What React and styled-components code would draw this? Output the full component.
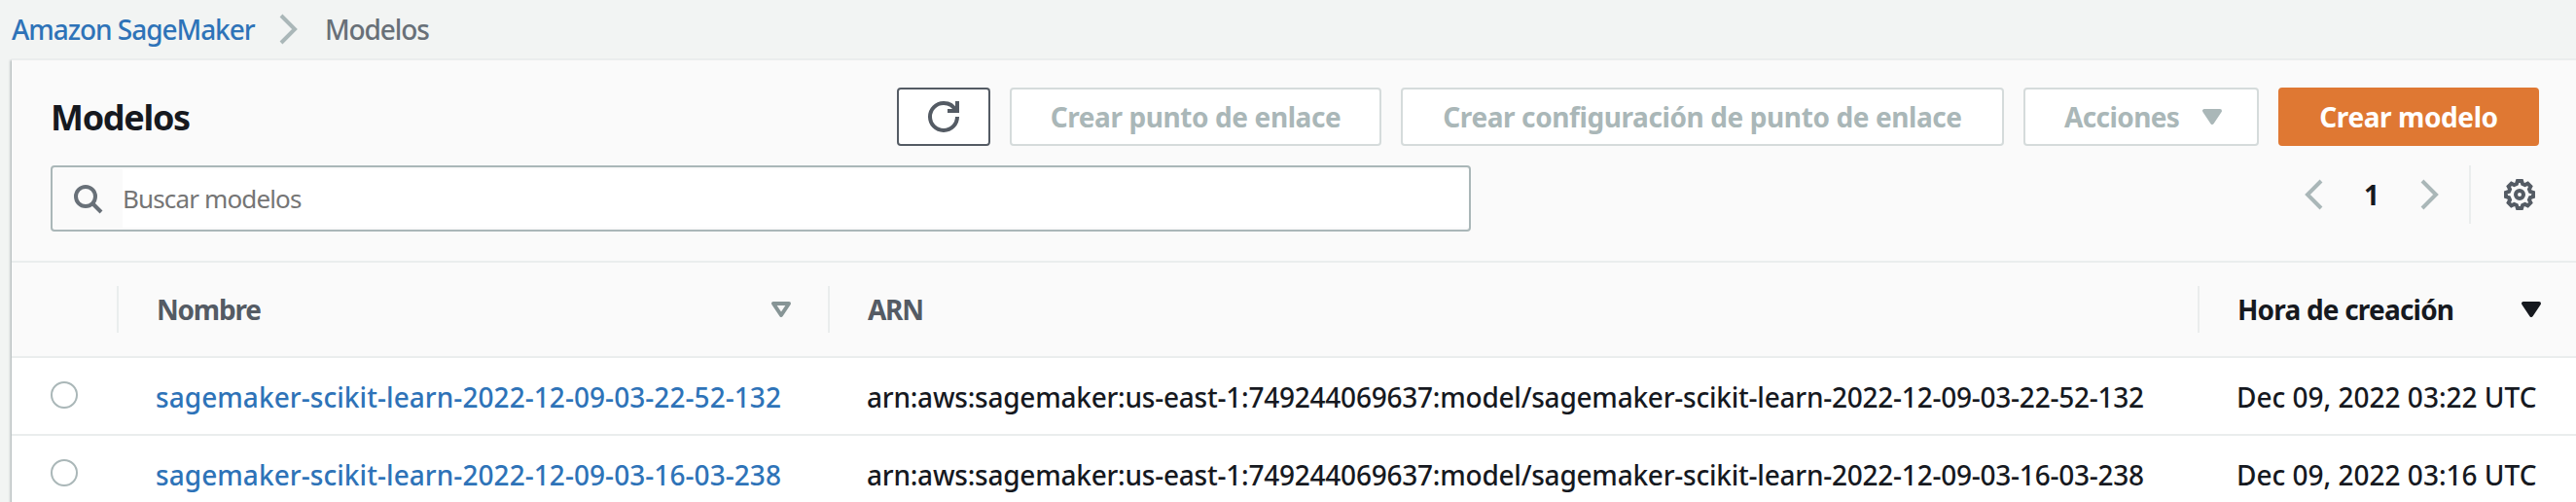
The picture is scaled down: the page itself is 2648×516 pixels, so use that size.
import React from 'react';
import styled, { createGlobalStyle, css } from 'styled-components';

const GlobalStyle = createGlobalStyle`
  * { box-sizing: border-box; }
  body {
    margin: 0;
    background: #f2f4f3;
    color: #16191f;
    font-family: "Noto Sans", "Open Sans", sans-serif;
    font-size: 28px;
    line-height: 38px;
    overflow: hidden;
  }
`;

const Page = styled.div`
  width: 2648px;
  height: 516px;
  overflow: hidden;
`;

const Breadcrumbs = styled.nav`
  display: flex;
  align-items: center;
  height: 60px;
  padding-left: 12px;
  font-weight: 500;
`;

const CrumbLink = styled.a`
  width: 269px;
  color: #2e73b8;
  text-decoration: none;
  letter-spacing: -1.05px;
`;

const CrumbCurrent = styled.span`
  padding-left: 21px;
  color: #687078;
  letter-spacing: -1.1px;
`;

const Icon = styled.svg.attrs({ viewBox: '0 0 16 16' })`
  width: 32px;
  height: 32px;
  flex: none;
  fill: none;
  stroke: currentColor;
  stroke-width: 2;
`;

const MutedIcon = styled(Icon)`
  color: #aab7b8;
`;

const Card = styled.section`
  width: 2638px;
  margin-left: 12px;
  border-top: 2px solid #eaeded;
  background: #fff;
  box-shadow:
    0 2px 2px 0 rgba(0, 28, 36, 0.3),
    2px 2px 2px 0 rgba(0, 28, 36, 0.15),
    -2px 2px 2px 0 rgba(0, 28, 36, 0.15);
`;

const CardHeader = styled.header`
  height: 208px;
  padding: 28px 40px 0;
  border-bottom: 2px solid #eaeded;
  background: #fafafa;
`;

const TitleRow = styled.div`
  display: flex;
  align-items: center;
  justify-content: space-between;
  height: 60px;
`;

const Title = styled.h1`
  margin: 0;
  padding-top: 1px;
  font-size: 36px;
  line-height: 48px;
  font-weight: 700;
  letter-spacing: -1.3px;
`;

const Actions = styled.div`
  display: flex;
  gap: 20px;
`;

const variants = {
  normal: css`
    border-color: #545b64;
    background: #fff;
    color: #545b64;
  `,
  disabled: css`
    border-color: #d5dbdb;
    background: #fff;
    color: #aab7b8;
  `,
  primary: css`
    border-color: #df7833;
    background: #df7833;
    color: #fff;
  `,
};

const Button = styled.button`
  display: flex;
  align-items: center;
  justify-content: center;
  width: ${(p) => p.$width}px;
  height: 60px;
  padding: 0;
  border: 2px solid;
  border-radius: 4px;
  font: inherit;
  font-weight: 700;
  letter-spacing: -0.4px;
  white-space: nowrap;
  ${(p) => variants[p.$variant]}
`;

const MenuButton = styled(Button)`
  justify-content: space-between;
  padding: 0 30px 0 40px;
  letter-spacing: -0.6px;
`;

const ButtonLabel = styled.span`
  padding-bottom: 1px;
`;

const FilterRow = styled.div`
  display: flex;
  justify-content: space-between;
  align-items: flex-start;
  margin-top: 20px;
`;

const SearchBox = styled.label`
  display: flex;
  align-items: center;
  width: 1460px;
  height: 68px;
  padding: 0 0 0 20px;
  border: 2px solid #aab7b8;
  border-radius: 4px;
  color: #687078;
`;

const SearchInput = styled.input`
  flex: 1;
  height: 60px;
  margin-left: 20px;
  padding: 0;
  border: 0;
  background: #fff;
  font: inherit;
  font-size: 26px;
  letter-spacing: -0.86px;
  &::placeholder {
    color: #757575;
    opacity: 1;
  }
`;

const Pager = styled.div`
  display: flex;
  align-items: center;
  height: 60px;
`;

const PageNumber = styled.span`
  width: 88px;
  padding-bottom: 1px;
  text-align: center;
  font-weight: 700;
`;

const Preferences = styled.div`
  display: flex;
  align-items: center;
  height: 60px;
  margin-left: 24px;
  padding: 0 4px 0 34px;
  border-left: 2px solid #eaeded;
  color: #545b64;
`;

const Row = styled.div`
  display: grid;
  grid-template-columns: 110px 731px 1408px 1fr;
  align-items: center;
  height: 80px;
  border-bottom: 2px solid #eaeded;
  font-weight: 500;
`;

const HeaderRow = styled(Row)`
  height: 98px;
  background: #fafafa;
  color: #545b64;
  font-weight: 700;
`;

const HeaderCell = styled.div`
  display: flex;
  align-items: center;
  justify-content: space-between;
  height: 48px;
  padding: 0 32px 0 39px;
  border-right: ${(p) => (p.$last ? 0 : '2px solid #eaeded')};
  color: ${(p) => (p.$sorted ? '#16191f' : 'inherit')};
  letter-spacing: ${(p) => p.$tracking || 0}px;
`;

const SortIcon = styled(Icon)`
  color: ${(p) => (p.$active ? '#16191f' : '#879596')};
`;

const RadioCell = styled.div`
  padding: 0 0 2px 40px;
`;

const Radio = styled.span`
  display: block;
  width: 28px;
  height: 28px;
  border: 2px solid #aab7b8;
  border-radius: 50%;
  background: #fff;
`;

const Cell = styled.div`
  padding: 1px 0 0 38px;
  white-space: nowrap;
  letter-spacing: ${(p) => p.$tracking || 0}px;
`;

const NameLink = styled.a`
  color: #2e73b8;
  text-decoration: none;
`;

const AngleRight = () => (
  <MutedIcon><path d="M4 1l7 7-7 7" /></MutedIcon>
);
const AngleLeft = () => (
  <MutedIcon><path d="M12 1L5 8l7 7" /></MutedIcon>
);
const Caret = () => (
  <Icon><path d="M4 5h8l-4 6-4-6z" fill="currentColor" strokeLinejoin="round" /></Icon>
);

// Eight-toothed outline: each tooth has two outer points and two root points.
const gearPoints = Array.from({ length: 8 }, (_, i) =>
  [[-16, 5.7], [-8.5, 7.07], [8.5, 7.07], [16, 5.7]].map(([offset, r]) => {
    const a = ((i * 45 + offset) * Math.PI) / 180;
    return `${(8 + r * Math.sin(a)).toFixed(2)},${(8 - r * Math.cos(a)).toFixed(2)}`;
  }).join(' ')
).join(' ');

const models = [
  { id: '2022-12-09-03-22-52-132', created: 'Dec 09, 2022 03:22 UTC' },
  { id: '2022-12-09-03-16-03-238', created: 'Dec 09, 2022 03:16 UTC' },
];

export default function App() {
  return (
    <Page>
      <GlobalStyle />
      <Breadcrumbs>
        <CrumbLink>Amazon SageMaker</CrumbLink>
        <AngleRight />
        <CrumbCurrent>Modelos</CrumbCurrent>
      </Breadcrumbs>
      <Card>
        <CardHeader>
          <TitleRow>
            <Title>Modelos</Title>
            <Actions>
              <Button $variant="normal" $width={96} aria-label="Actualizar">
                <Icon>
                  <path d="M10 5h5V0" />
                  <path d="M15 8a6.957 6.957 0 0 1-7 7 6.957 6.957 0 0 1-7-7 6.957 6.957 0 0 1 7-7 6.87 6.87 0 0 1 6.3 4" />
                </Icon>
              </Button>
              <Button $variant="disabled" $width={382}>
                <ButtonLabel>Crear punto de enlace</ButtonLabel>
              </Button>
              <Button $variant="disabled" $width={620}>
                <ButtonLabel>Crear configuración de punto de enlace</ButtonLabel>
              </Button>
              <MenuButton $variant="disabled" $width={242}>
                <ButtonLabel>Acciones</ButtonLabel>
                <Caret />
              </MenuButton>
              <Button $variant="primary" $width={268}>
                <ButtonLabel>Crear modelo</ButtonLabel>
              </Button>
            </Actions>
          </TitleRow>
          <FilterRow>
            <SearchBox>
              <Icon>
                <circle cx="7" cy="7" r="5" />
                <path d="M15 15l-4.5-4.5" />
              </Icon>
              <SearchInput placeholder="Buscar modelos" />
            </SearchBox>
            <Pager>
              <AngleLeft />
              <PageNumber>1</PageNumber>
              <AngleRight />
              <Preferences>
                <Icon>
                  <polygon points={gearPoints} />
                  <circle cx="8" cy="8" r="2" />
                </Icon>
              </Preferences>
            </Pager>
          </FilterRow>
        </CardHeader>
        <HeaderRow>
          <HeaderCell />
          <HeaderCell $tracking={-1.2}>
            <span>Nombre</span>
            <SortIcon><path d="M4 5h8l-4 6-4-6z" strokeLinejoin="round" /></SortIcon>
          </HeaderCell>
          <HeaderCell $tracking={-1.3}>
            <span>ARN</span>
          </HeaderCell>
          <HeaderCell $tracking={-0.8} $sorted $last>
            <span>Hora de creación</span>
            <SortIcon $active>
              <path d="M4 5h8l-4 6-4-6z" fill="currentColor" strokeLinejoin="round" />
            </SortIcon>
          </HeaderCell>
        </HeaderRow>
        {models.map((m) => (
          <Row key={m.id}>
            <RadioCell><Radio /></RadioCell>
            <Cell $tracking={0.06}>
              <NameLink>sagemaker-scikit-learn-{m.id}</NameLink>
            </Cell>
            <Cell $tracking={-0.23}>
              arn:aws:sagemaker:us-east-1:749244069637:model/sagemaker-scikit-learn-{m.id}
            </Cell>
            <Cell $tracking={0}>{m.created}</Cell>
          </Row>
        ))}
      </Card>
    </Page>
  );
}
